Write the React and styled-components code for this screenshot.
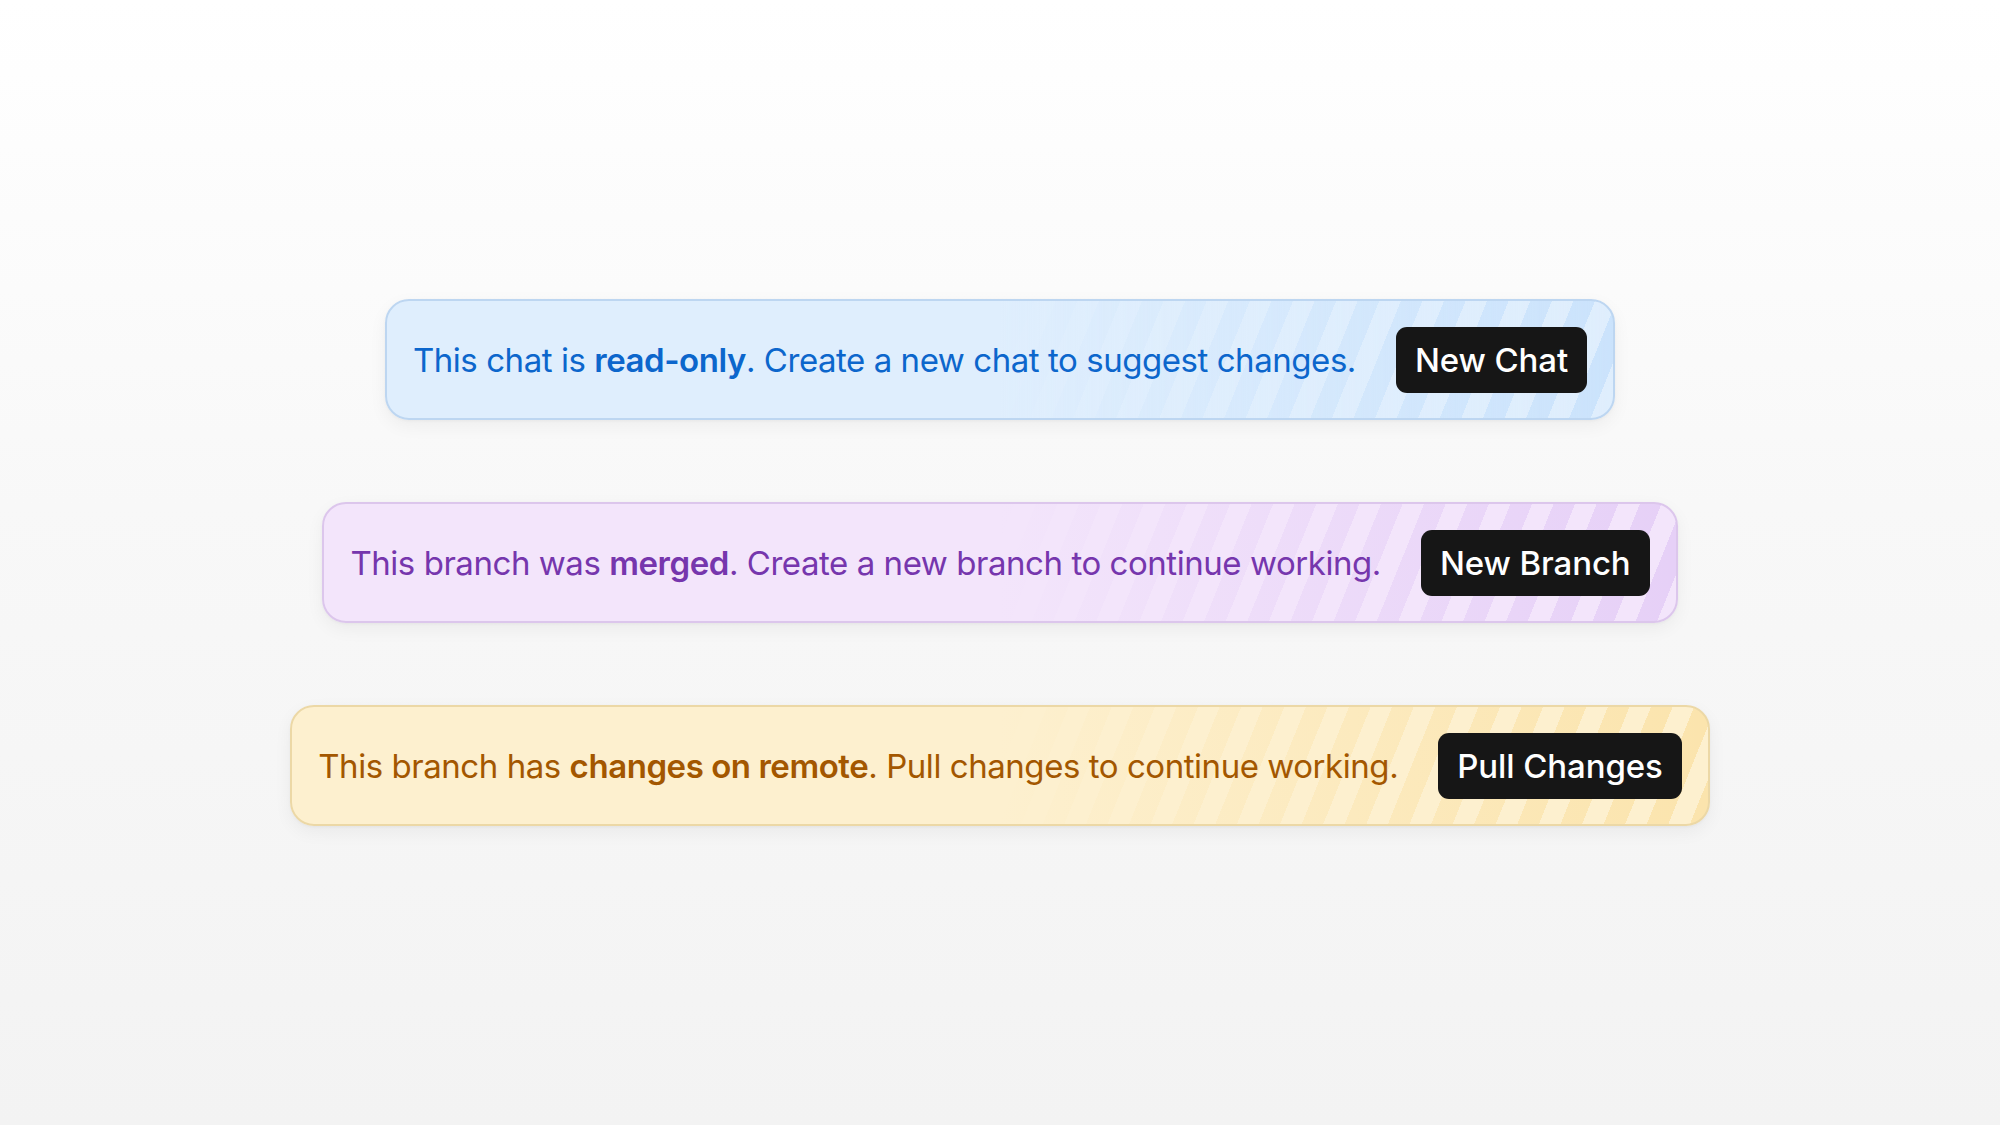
import React from 'react';
import styled, { createGlobalStyle } from 'styled-components';

const GlobalStyle = createGlobalStyle`
  html, body {
    margin: 0;
    padding: 0;
  }
  body {
    font-family: Inter, "Noto Sans", sans-serif;
    -webkit-font-smoothing: antialiased;
  }
`;

const tones = {
  blue: {
    bg: '#dfeefd',
    stripe: '#cbe3fc',
    border: '#bdd6f1',
    text: '#0c66cc',
  },
  purple: {
    bg: '#f3e5fb',
    stripe: '#e6d0f7',
    border: '#dcc6ec',
    text: '#7636ad',
  },
  amber: {
    bg: '#fdf0cf',
    stripe: '#fbe4ad',
    border: '#ecd8a6',
    text: '#a35700',
  },
};

const Page = styled.div`
  min-height: 1125px;
  box-sizing: border-box;
  display: flex;
  flex-direction: column;
  align-items: center;
  justify-content: center;
  gap: 82px;
  background: linear-gradient(180deg, #ffffff 0%, #f8f8f8 45%, #f3f3f3 100%);
`;

const Banner = styled.div`
  display: inline-flex;
  align-items: center;
  gap: 40px;
  box-sizing: border-box;
  height: 121px;
  padding: 0 26px 0 26px;
  border: 2px solid ${p => tones[p.$tone].border};
  border-radius: 24px;
  background:
    linear-gradient(90deg, ${p => tones[p.$tone].bg} 50%, ${p => tones[p.$tone].bg}00 100%),
    repeating-linear-gradient(
      112deg,
      ${p => tones[p.$tone].bg} 0 20px,
      ${p => tones[p.$tone].stripe} 20px 40px
    );
  box-shadow: 0 6px 18px rgba(0, 0, 0, 0.05), 0 1px 3px rgba(0, 0, 0, 0.04);
`;

const Message = styled.p`
  margin: 0;
  font-size: 33px;
  letter-spacing: -0.45px;
  font-weight: 400;
  color: ${p => tones[p.$tone].text};
  white-space: nowrap;

  strong {
    font-weight: 560;
  }
`;

const ActionButton = styled.button`
  font-family: inherit;
  font-size: 33px;
  font-weight: 500;
  letter-spacing: -0.1px;
  color: #ffffff;
  background: #161616;
  border: none;
  border-radius: 11px;
  height: 66px;
  padding: 0 19px;
  white-space: nowrap;
  cursor: pointer;
`;

const notices = [
  {
    tone: 'blue',
    before: 'This chat is ',
    bold: 'read-only',
    after: '. Create a new chat to suggest changes.',
    action: 'New Chat',
  },
  {
    tone: 'purple',
    before: 'This branch was ',
    bold: 'merged',
    after: '. Create a new branch to continue working.',
    action: 'New Branch',
  },
  {
    tone: 'amber',
    before: 'This branch has ',
    bold: 'changes on remote',
    after: '. Pull changes to continue working.',
    action: 'Pull Changes',
  },
];

export default function App() {
  return (
    <>
      <GlobalStyle />
      <Page>
        {notices.map(n => (
          <Banner key={n.action} $tone={n.tone}>
            <Message $tone={n.tone}>
              {n.before}<strong>{n.bold}</strong>{n.after}
            </Message>
            <ActionButton>{n.action}</ActionButton>
          </Banner>
        ))}
      </Page>
    </>
  );
}
